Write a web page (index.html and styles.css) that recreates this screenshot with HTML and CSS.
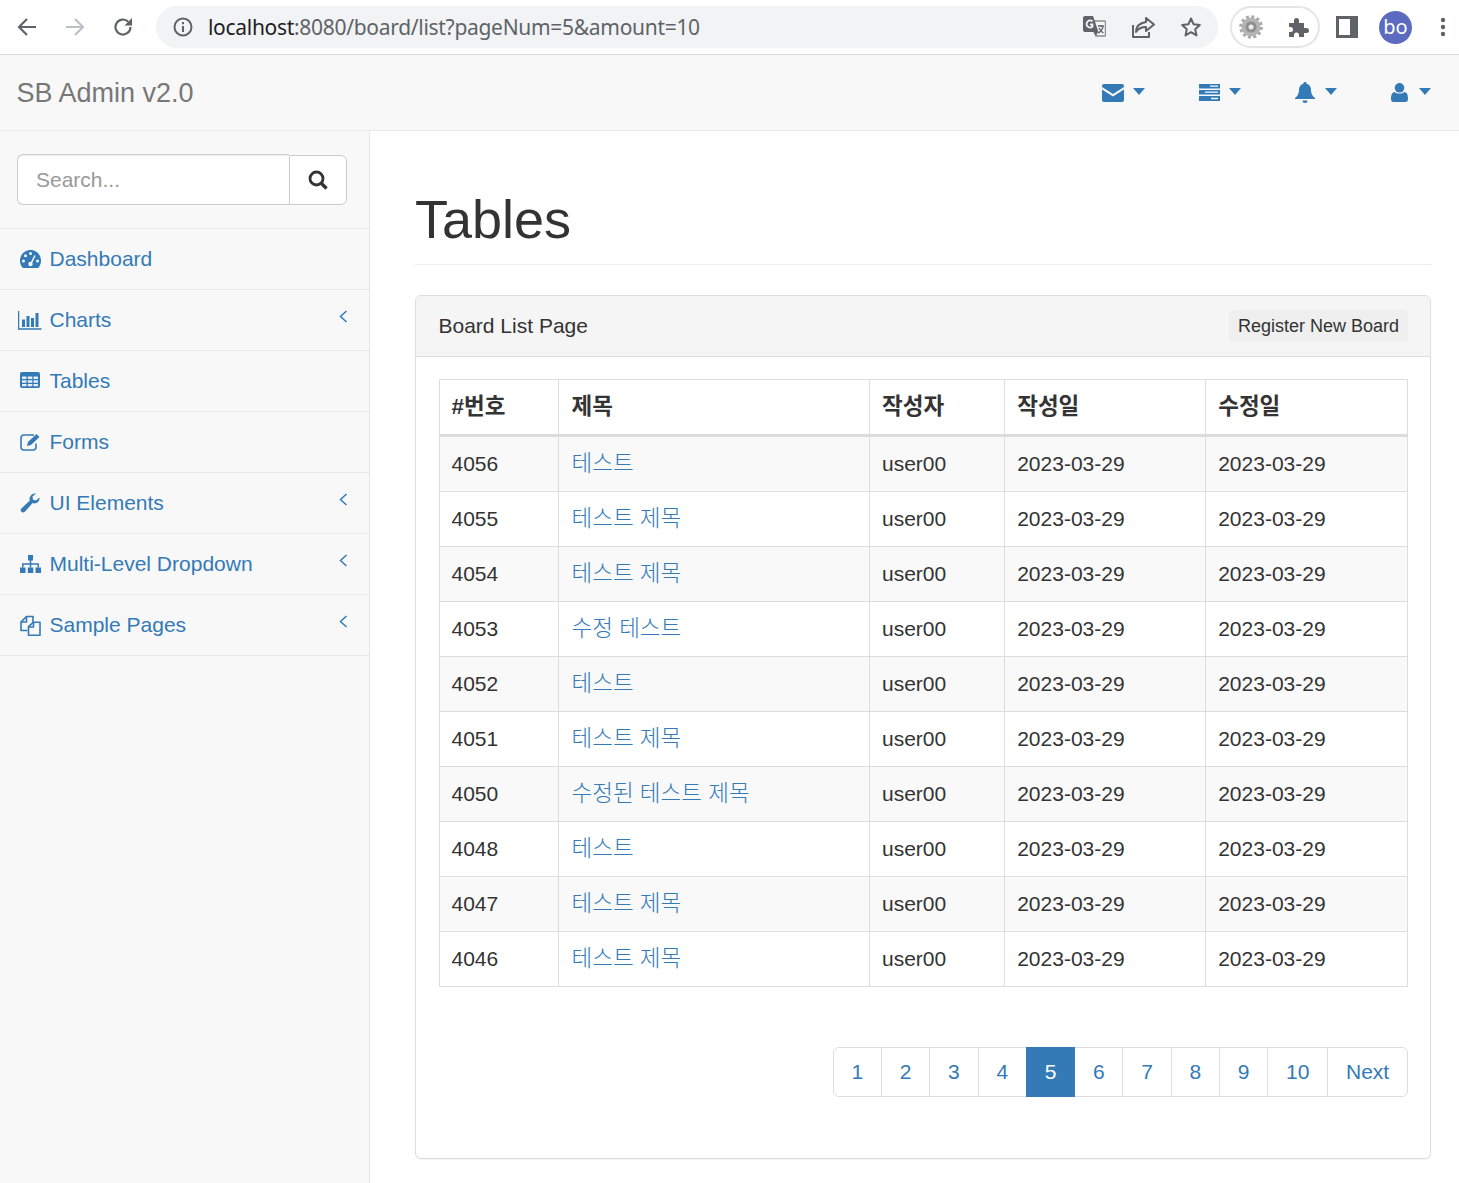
FILE: index.html
```html
<!DOCTYPE html>
<html lang="ko">
<head>
<meta charset="utf-8">
<title>Tables</title>
<link rel="stylesheet" href="styles.css">
</head>
<body>
<header class="chrome">
  <svg class="c-btn first" width="20" height="20" viewBox="0 0 20 20"><path d="M19 10H2M10 2l-8 8 8 8" class="st-dark"/></svg>
  <svg class="c-btn" width="20" height="20" viewBox="0 0 20 20"><path d="M1 10h17M10 2l8 8-8 8" class="st-light"/></svg>
  <svg class="c-btn" width="20" height="20" viewBox="0 0 20 20"><path d="M17.5 10a7.5 7.5 0 1 1-2.2-5.3" class="st-dark"/><path d="M19 1v7.500h-7.500z" class="fi-dark"/></svg>
  <div class="omnibox">
    <svg class="info" width="20" height="20" viewBox="0 0 20 20"><circle cx="10" cy="10" r="8.500" class="st-thin"/><path d="M10 9v6M10 5v2.200" class="st-thin"/></svg>
    <span class="url"><b>localhost</b>:8080/board/list?pageNum=5&amp;amount=10</span>
    <svg class="o-translate" width="23" height="22" viewBox="0 0 23 22"><path d="M9 5h12.500a1 1 0 0 1 1 1v13a1 1 0 0 1-1 1H13l-2-4z" class="st-grey"/><path d="M2 0h8l5.500 16H2a2 2 0 0 1-2-2V2a2 2 0 0 1 2-2z" class="fi-dark"/><path d="M13 20l2-4h-4z" class="fi-dark"/><path d="M15 10h6M18 9v2M20 11c-1 3-2.500 5-5 6M16 12c1 2 2.500 4 4.500 5" class="st-x"/><path d="M9.500 5.500a3.500 3.500 0 1 0 0 5V8.500H7" class="st-white"/></svg>
    <svg class="o-share" width="24" height="22" viewBox="0 0 24 22"><path d="M2 9v12h16v-5" class="st-mid"/><path d="M15 2l8 6.500-8 6.500v-4c-5 0-8 2-10 5 0-6 4-9 10-10z" class="st-mid"/></svg>
    <svg class="o-star" width="22" height="22" viewBox="0 0 22 22"><path d="M11 2.500l2.600 5.800 6.200.7-4.600 4.200 1.300 6.200L11 16.200l-5.500 3.200 1.300-6.200L2.200 9l6.200-.7z" class="st-mid"/></svg>
  </div>
  <div class="ext-pill">
    <svg width="24" height="24" viewBox="0 0 24 24"><circle cx="12" cy="12" r="9.500" class="gear-ring"/><circle cx="12" cy="12" r="10.500" class="gear-teeth"/><circle cx="12" cy="12" r="5.500" class="gear-hub"/><circle cx="12" cy="12" r="2.500" class="gear-eye"/></svg>
    <svg width="22" height="22" viewBox="0 0 22 22"><path d="M1 7h5V4.500a2.500 2.500 0 0 1 5 0V7h5v5h2.500a2.500 2.500 0 0 1 0 5H16v4h-5v-2a2.500 2.500 0 0 0-5 0v2H1v-5h1.500a2.500 2.500 0 0 0 0-5H1z" class="fi-dark"/></svg>
  </div>
  <svg class="side-panel" width="22" height="22" viewBox="0 0 22 22"><path d="M0 0h22v22H0zM3 3v16h11V3z" class="fi-even"/></svg>
  <span class="avatar">bo</span>
  <svg class="kebab" width="6" height="20" viewBox="0 0 6 20"><circle cx="3" cy="3" r="2.200" class="fi-dark"/><circle cx="3" cy="10" r="2.200" class="fi-dark"/><circle cx="3" cy="17" r="2.200" class="fi-dark"/></svg>
</header>

<nav class="navbar">
  <a class="brand">SB Admin v2.0</a>
  <div class="nav-icons">
    <span class="nav-item">
      <svg width="22" height="18" viewBox="0 0 22 18"><path d="M2 0h18a2 2 0 0 1 2 2v1L11 10 0 3V2a2 2 0 0 1 2-2zM0 5.500l11 7 11-7V16a2 2 0 0 1-2 2H2a2 2 0 0 1-2-2z" class="fi-blue"/></svg>
      <i class="caret"></i>
    </span>
    <span class="nav-item">
      <svg width="21" height="17" viewBox="0 0 21 17"><path d="M0 0h21v4.500H0zM0 6h21v4.500H0zM0 12h21v5H0z" class="fi-blue"/><path d="M11 2.200h8M6 8.200h13M12 14.500h7" class="st-bar"/></svg>
      <i class="caret"></i>
    </span>
    <span class="nav-item">
      <svg width="21" height="21" viewBox="0 0 21 21"><path d="M10 0a1.500 1.500 0 0 1 1.500 1.800C14.500 2.500 16 5 16 8c0 4 1.500 6 4 8v1H0v-1c2.500-2 4-4 4-8 0-3 1.500-5.500 4.500-6.200A1.500 1.500 0 0 1 10 0zM7.500 18.500h5a2.500 2.500 0 0 1-5 0z" class="fi-blue"/></svg>
      <i class="caret"></i>
    </span>
    <span class="nav-item">
      <svg width="19" height="19" viewBox="0 0 19 19"><circle cx="8.500" cy="4.800" r="4.800" class="fi-blue"/><path d="M3.500 9c1.300 1 3 1.600 5 1.600s3.700-.6 5-1.600c2.500.3 3.500 3 3.500 7 0 2-1 3-2.500 3h-12C1 19 0 18 0 16c0-4 1-6.700 3.500-7z" class="fi-blue"/></svg>
      <i class="caret"></i>
    </span>
  </div>
</nav>

<div class="layout">
  <aside class="sidebar">
    <div class="search">
      <input class="search-input" type="text" placeholder="Search...">
      <button class="search-btn" type="button">
        <svg width="20" height="20" viewBox="0 0 20 20"><circle cx="8.500" cy="8.500" r="6.500" class="st-search"/><path d="M13.500 13.500l5 5" class="st-search-h"/></svg>
      </button>
    </div>
    <ul class="menu">
      <li><a class="menu-link"><span class="mi">
        <svg width="21" height="18" viewBox="0 0 21 18"><path d="M10.500 0C4.700 0 0 4.700 0 10.500c0 2.500.7 4.700 2 6.500.4.600.8 1 1.500 1h14c.7 0 1.100-.4 1.500-1 1.300-1.800 2-4 2-6.500C21 4.700 16.300 0 10.500 0z" class="fi-blue"/><circle cx="3.500" cy="11" r="1.500" class="fi-hole"/><circle cx="5.500" cy="5.800" r="1.500" class="fi-hole"/><circle cx="10.500" cy="3.500" r="1.500" class="fi-hole"/><circle cx="17.500" cy="11" r="1.500" class="fi-hole"/><path d="M15 5.500l-4 8" class="st-needle"/><circle cx="10.500" cy="14" r="2.200" class="fi-hole"/></svg>
      </span>Dashboard</a></li>
      <li><a class="menu-link"><span class="mi">
        <svg width="24" height="19" viewBox="0 0 24 19"><path d="M.5 0v18h23" class="st-blue"/><path d="M4 8.500h3V16H4zM8.500 5h3v11h-3zM13 7h3v9h-3zM17.500 2h3v14h-3z" class="fi-blue"/></svg>
      </span>Charts<svg class="chev" width="9" height="13" viewBox="0 0 9 13"><path d="M7.500 1L1.500 6.500l6 5.500" class="st-blue"/></svg></a></li>
      <li><a class="menu-link"><span class="mi">
        <svg width="20" height="18" viewBox="0 0 20 18"><path d="M2 0h16a2 2 0 0 1 2 2v12a2 2 0 0 1-2 2H2a2 2 0 0 1-2-2V2a2 2 0 0 1 2-2z" class="fi-blue"/><path d="M2 4.500h4.500v2.500H2zM7.800 4.500h4.500v2.500H7.800zM13.500 4.500H18v2.500h-4.500zM2 8.300h4.500v2.500H2zM7.800 8.300h4.500v2.500H7.800zM13.500 8.300H18v2.500h-4.500zM2 12h4.500v2.200H2zM7.800 12h4.500v2.200H7.800zM13.500 12H18v2.200h-4.500z" class="fi-cell"/></svg>
      </span>Tables</a></li>
      <li><a class="menu-link"><span class="mi">
        <svg width="21" height="18" viewBox="0 0 21 18"><path d="M16 10.500V14a3 3 0 0 1-3 3H4a3 3 0 0 1-3-3V5a3 3 0 0 1 3-3h10" class="st-form"/><path d="M7 13l1-4L16.500 1l3 3-8.500 8z" class="fi-blue"/></svg>
      </span>Forms</a></li>
      <li><a class="menu-link"><span class="mi">
        <svg width="20" height="20" viewBox="0 0 20 20"><path d="M19.500 4.500c.5 3-2 6-5 6-.8 0-1.300-.1-1.900-.4L4.800 18.800c-1 1-2.500 1-3.400 0-.9-1-.9-2.300 0-3.300l8.500-8c-.4-.8-.5-1.500-.3-2.500C10.200 2 13 0 16 .5l-3.500 3 .5 3.200 3 .8z" class="fi-blue"/></svg>
      </span>UI Elements<svg class="chev" width="9" height="13" viewBox="0 0 9 13"><path d="M7.500 1L1.500 6.500l6 5.500" class="st-blue"/></svg></a></li>
      <li><a class="menu-link"><span class="mi">
        <svg width="21" height="18" viewBox="0 0 21 18"><path d="M8 0h5v5.500H8zM0 12.500h5.500V18H0zM7.800 12.500h5.500V18H7.800zM15.500 12.500H21V18h-5.500z" class="fi-blue"/><path d="M10.500 5v7.500M2.800 12.500V9h15.400v3.500" class="st-blue"/></svg>
      </span>Multi-Level Dropdown<svg class="chev" width="9" height="13" viewBox="0 0 9 13"><path d="M7.500 1L1.500 6.500l6 5.500" class="st-blue"/></svg></a></li>
      <li><a class="menu-link"><span class="mi">
        <svg width="21" height="21" viewBox="0 0 21 21"><path d="M7.500 15.500H1V7l5.500-5.500H13V7" class="st-form"/><path d="M6.500 1.500V7H1" class="st-form"/><path d="M13.500 7.200H20v13H8.500v-8.500z" class="st-form"/><path d="M13.500 7.200v4.800H8.500" class="st-form"/></svg>
      </span>Sample Pages<svg class="chev" width="9" height="13" viewBox="0 0 9 13"><path d="M7.500 1L1.500 6.500l6 5.500" class="st-blue"/></svg></a></li>
    </ul>
  </aside>

  <main class="content">
    <h1 class="page-title">Tables</h1>
    <section class="panel">
      <div class="panel-head">
        <span>Board List Page</span>
        <button class="reg-btn" type="button">Register New Board</button>
      </div>
      <div class="panel-body">
        <table class="board">
          <colgroup><col class="c1"><col class="c2"><col class="c3"><col class="c4"><col class="c5"></colgroup>
          <thead><tr><th>#번호</th><th>제목</th><th>작성자</th><th>작성일</th><th>수정일</th></tr></thead>
          <tbody>
            <tr><td>4056</td><td><a>테스트</a></td><td>user00</td><td>2023-03-29</td><td>2023-03-29</td></tr>
            <tr><td>4055</td><td><a>테스트 제목</a></td><td>user00</td><td>2023-03-29</td><td>2023-03-29</td></tr>
            <tr><td>4054</td><td><a>테스트 제목</a></td><td>user00</td><td>2023-03-29</td><td>2023-03-29</td></tr>
            <tr><td>4053</td><td><a>수정 테스트</a></td><td>user00</td><td>2023-03-29</td><td>2023-03-29</td></tr>
            <tr><td>4052</td><td><a>테스트</a></td><td>user00</td><td>2023-03-29</td><td>2023-03-29</td></tr>
            <tr><td>4051</td><td><a>테스트 제목</a></td><td>user00</td><td>2023-03-29</td><td>2023-03-29</td></tr>
            <tr><td>4050</td><td><a>수정된 테스트 제목</a></td><td>user00</td><td>2023-03-29</td><td>2023-03-29</td></tr>
            <tr><td>4048</td><td><a>테스트</a></td><td>user00</td><td>2023-03-29</td><td>2023-03-29</td></tr>
            <tr><td>4047</td><td><a>테스트 제목</a></td><td>user00</td><td>2023-03-29</td><td>2023-03-29</td></tr>
            <tr><td>4046</td><td><a>테스트 제목</a></td><td>user00</td><td>2023-03-29</td><td>2023-03-29</td></tr>
          </tbody>
        </table>
        <ul class="pagination">
          <li><a>1</a></li><li><a>2</a></li><li><a>3</a></li><li><a>4</a></li><li class="active"><a>5</a></li><li><a>6</a></li><li><a>7</a></li><li><a>8</a></li><li><a>9</a></li><li><a>10</a></li><li><a>Next</a></li>
        </ul>
      </div>
    </section>
  </main>
</div>
</body>
</html>
```
FILE: styles.css
```css
* { box-sizing: border-box; }
html, body { height: 100%; }
body {
  margin: 0;
  overflow: hidden;
  background: #fff;
  color: #333;
  font: 21px/30px "Liberation Sans", "Noto Sans CJK KR", sans-serif;
}
svg { display: block; flex: none; }

/* browser chrome */
.chrome {
  height: 55px;
  display: flex;
  align-items: center;
  background: #fff;
  border-bottom: 1px solid #dadce0;
  padding-left: 17px;
}
.c-btn { margin-right: 28px; }
.c-btn:nth-of-type(3) { margin-right: 23px; }
.omnibox {
  width: 1062px;
  height: 42px;
  border-radius: 21px;
  background: #f1f3f4;
  display: flex;
  align-items: center;
  padding-left: 17px;
}
.url {
  font: 21px/42px "Noto Sans", sans-serif;
  color: #5f6368;
  margin-left: 15px;
  flex: 1;
  letter-spacing: -0.3px;
  white-space: nowrap;
}
.url b { font-weight: 400; color: #202124; }
.o-translate { margin-right: 25px; }
.o-share { margin-right: 25px; }
.o-star { margin-right: 16px; }
.ext-pill {
  width: 90px;
  height: 42px;
  margin-left: 12px;
  border: 2px solid #e3e5e7;
  border-radius: 21px;
  display: flex;
  align-items: center;
  gap: 25px;
  padding-left: 7px;
}
.side-panel { margin-left: 16px; }
.avatar {
  width: 33px;
  height: 33px;
  margin-left: 21px;
  border-radius: 50%;
  background: #5c6bc0;
  color: #fff;
  font: 20px/32px "Noto Sans", sans-serif;
  text-align: center;
}
.kebab { margin-left: 28px; }

.st-dark { fill: none; stroke: #5f6368; stroke-width: 2.2; }
.st-light { fill: none; stroke: #bdc1c6; stroke-width: 2.2; }
.fi-dark { fill: #5f6368; }
.st-thin { fill: none; stroke: #5f6368; stroke-width: 2; }
.st-grey { fill: #f1f3f4; stroke: #8a8d91; stroke-width: 1.4; }
.st-x { fill: none; stroke: #5f6368; stroke-width: 1.3; }
.st-white { fill: none; stroke: #f1f3f4; stroke-width: 1.8; }
.st-mid { fill: none; stroke: #5f6368; stroke-width: 2; stroke-linejoin: round; }
.gear-ring { fill: #b4b4b4; }
.gear-teeth { fill: none; stroke: #a8a8a8; stroke-width: 2.6; stroke-dasharray: 3 2.5; }
.gear-hub { fill: #8f8f8f; }
.gear-eye { fill: #ececec; }
.fi-even { fill: #5f6368; fill-rule: evenodd; }

/* navbar */
.navbar {
  height: 76px;
  display: flex;
  align-items: center;
  justify-content: space-between;
  background: #f8f8f8;
  border-bottom: 1px solid #e7e7e7;
  padding: 0 28px 0 16.5px;
}
.brand { font-size: 27px; color: #777; }
.nav-icons { display: flex; gap: 54px; }
.nav-item { display: flex; align-items: center; gap: 9px; }
.caret {
  width: 0;
  height: 0;
  border-top: 7px solid #337ab7;
  border-left: 6px solid transparent;
  border-right: 6px solid transparent;
  margin-top: -2px;
}
.fi-blue { fill: #337ab7; }
.st-bar { fill: none; stroke: #f8f8f8; stroke-width: 1.3; }
.st-blue { fill: none; stroke: #337ab7; stroke-width: 1.5; }
.st-form { fill: none; stroke: #337ab7; stroke-width: 1.6; stroke-linejoin: round; }
.fi-hole { fill: #f8f8f8; }
.fi-cell { fill: #e6edf4; }
.st-needle { fill: none; stroke: #f8f8f8; stroke-width: 1.6; }

/* layout */
.layout { display: flex; height: calc(100vh - 131px); }
.sidebar {
  width: 370px;
  flex: none;
  background: #f8f8f8;
  border-right: 1px solid #e7e7e7;
}
.search {
  height: 98px;
  display: flex;
  padding: 23px 22px 23px 17px;
  border-bottom: 1px solid #e7e7e7;
}
.search-input {
  width: 272px;
  height: 51px;
  border: 1px solid #ccc;
  border-right: 0;
  border-radius: 6px 0 0 6px;
  box-shadow: inset 0 1px 1px rgba(0,0,0,.075);
  padding: 0 18px;
  font: 21px "Liberation Sans", sans-serif;
  color: #555;
  background: #fff;
}
.search-input::placeholder { color: #999; opacity: 1; }
.search-btn {
  width: 59px;
  height: 50px;
  margin-top: 1px;
  border: 1px solid #ccc;
  border-radius: 0 6px 6px 0;
  background: #fff;
  display: flex;
  align-items: center;
  justify-content: center;
  padding: 0;
}
.st-search { fill: none; stroke: #333; stroke-width: 2.8; }
.st-search-h { fill: none; stroke: #333; stroke-width: 3.4; }
.menu { list-style: none; margin: 0; padding: 0; }
.menu li { border-bottom: 1px solid #e7e7e7; }
.menu-link {
  height: 60px;
  display: flex;
  align-items: center;
  padding-left: 18px;
  padding-right: 21px;
  color: #337ab7;
  white-space: nowrap;
}
.mi {
  width: 31.5px;
  flex: none;
  display: flex;
  justify-content: center;
  padding-right: 7.5px;
}
.chev { margin-left: auto; margin-bottom: 8px; }

/* content */
.content { flex: 1; min-width: 0; padding: 0 28px 0 45px; }
.page-title {
  margin: 60px 0 30px;
  padding-bottom: 17px;
  border-bottom: 1px solid #eee;
  font-size: 54px;
  font-weight: 400;
  line-height: 56px;
  color: #333;
}
.panel {
  height: 864px;
  border: 1px solid #ddd;
  border-radius: 6px;
  background: #fff;
  box-shadow: 0 1px 1px rgba(0,0,0,.05);
}
.panel-head {
  height: 61px;
  display: flex;
  align-items: center;
  justify-content: space-between;
  padding: 0 22px 0 22.5px;
  background: #f5f5f5;
  border-bottom: 1px solid #ddd;
  border-radius: 5px 5px 0 0;
}
.reg-btn {
  height: 32px;
  padding: 0 9px;
  border: 0;
  border-radius: 4px;
  background: #efefef;
  color: #333;
  font: 18px "Liberation Sans", sans-serif;
}
.panel-body { padding: 22px 22px 0 23px; }
.board {
  width: 968px;
  table-layout: fixed;
  border-collapse: collapse;
}
.c1 { width: 119px; }
.c2 { width: 311px; }
.c3 { width: 135px; }
.c4 { width: 201px; }
.c5 { width: 202px; }
.board th, .board td {
  border: 1px solid #ddd;
  padding: 12px;
  height: 55px;
  line-height: 30px;
  text-align: left;
  vertical-align: top;
  white-space: nowrap;
}
.board td:first-child, .board th:first-child { padding-left: 11.5px; }
.board td:nth-child(n+4), .board th:nth-child(n+4) { padding-left: 12.2px; }
.board td:nth-child(2), .board th:nth-child(2) { padding-left: 12.5px; }
.board th { font-weight: 700; font-size: 22.5px; border-bottom: 3px solid #ddd; height: 56px; }
.board tbody tr:nth-child(odd) { background: #f9f9f9; }
.board a {
  color: #337ab7;
  font-size: 22.5px;
  font-weight: 300;
}
.pagination {
  list-style: none;
  display: flex;
  justify-content: flex-end;
  margin: 60px 0 0;
  padding: 0;
}
.pagination a {
  display: block;
  height: 50px;
  padding: 9px 17.8px;
  border: 1px solid #ddd;
  margin-left: -1px;
  background: #fff;
  color: #337ab7;
}
.pagination li:first-child a { margin-left: 0; border-radius: 6px 0 0 6px; }
.pagination li:last-child a { border-radius: 0 6px 6px 0; }
.pagination .active a { background: #337ab7; border-color: #337ab7; color: #fff; position: relative; }
```
